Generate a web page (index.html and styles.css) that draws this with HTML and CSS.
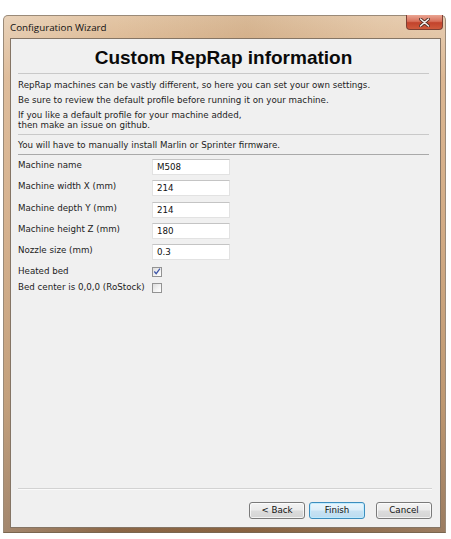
FILE: index.html
```html
<!DOCTYPE html>
<html>
<head>
<meta charset="utf-8">
<link rel="stylesheet" href="styles.css">
</head>
<body>
<div class="window">
  <div class="titlebar">
    <span class="title">Configuration Wizard</span>
    <div class="close">
      <svg width="11" height="9" viewBox="0 0 11 9"><path d="M1.5 1 L9.5 8 M9.5 1 L1.5 8" stroke="#4a2a20" stroke-width="3.2" stroke-linecap="round"/><path d="M1.5 1 L9.5 8 M9.5 1 L1.5 8" stroke="#f4f0ee" stroke-width="1.6" stroke-linecap="round"/></svg>
    </div>
  </div>
  <div class="client">
    <h1 class="heading">Custom RepRap information</h1>
    <div class="sep sep-light"></div>
    <p class="line first">RepRap machines can be vastly different, so here you can set your own settings.</p>
    <p class="line">Be sure to review the default profile before running it on your machine.</p>
    <p class="multi">If you like a default profile for your machine added,<br>then make an issue on github.</p>
    <div class="sep sep-light"></div>
    <p class="line fw">You will have to manually install Marlin or Sprinter firmware.</p>
    <div class="sep sep-dark"></div>
    <div class="form">
      <div class="row"><span class="label">Machine name</span><div class="input">M508</div></div>
      <div class="row"><span class="label">Machine width X (mm)</span><div class="input">214</div></div>
      <div class="row"><span class="label">Machine depth Y (mm)</span><div class="input">214</div></div>
      <div class="row"><span class="label">Machine height Z (mm)</span><div class="input">180</div></div>
      <div class="row"><span class="label">Nozzle size (mm)</span><div class="input">0.3</div></div>
      <div class="row check-row first-check"><span class="label">Heated bed</span>
        <div class="check checked"><svg width="9" height="9" viewBox="0 0 9 9"><path d="M1.5 4.5 L3.6 7 L7.8 1.2" fill="none" stroke="#3d55a8" stroke-width="1.4"/></svg></div>
      </div>
      <div class="row check-row"><span class="label">Bed center is 0,0,0 (RoStock)</span><div class="check"></div></div>
    </div>
    <div class="bottom">
      <div class="sep sep-bottom"></div>
      <div class="buttons">
        <div class="btn">&lt; Back</div>
        <div class="btn default">Finish</div>
        <div class="btn cancel">Cancel</div>
      </div>
    </div>
  </div>
</div>
</body>
</html>
```
FILE: styles.css
```css
html, body {
  margin: 0;
  padding: 0;
  background: #ffffff;
}
.window {
  margin: 15px 0 0 3px;
  width: 443px;
  height: 518px;
  box-sizing: border-box;
  padding: 0 4px 4px 6px;
  border-radius: 5px 5px 0 0;
  border: 1px solid #9a8a78;
  border-bottom-color: #7a6650;
  background:
    linear-gradient(90deg, rgba(255,255,255,0.22) 0%, rgba(255,255,255,0) 25%, rgba(120,70,20,0.10) 55%, rgba(255,255,255,0.08) 85%, rgba(255,255,255,0.15) 100%),
    linear-gradient(180deg, #e3c6a6 0%, #d6ab80 12%, #cb9d70 40%, #b38658 75%, #8a6646 100%);
  display: flex;
  flex-direction: column;
}
.titlebar {
  height: 22px;
  display: flex;
  align-items: center;
  position: relative;
  flex: none;
}
.title {
  font-family: "Open Sans", "Noto Sans", sans-serif;
  font-size: 9.8px;
  color: #111111;
  margin-left: 0px;
  margin-top: 1px;
}
.close {
  position: absolute;
  right: -2px;
  top: -1px;
  width: 37px;
  height: 15px;
  box-sizing: border-box;
  border: 1px solid #7d3f33;
  border-top: none;
  border-radius: 0 0 4px 4px;
  background: linear-gradient(180deg, #e9a593 0%, #d8705a 45%, #c2432c 55%, #cf5a3c 100%);
  display: flex;
  align-items: center;
  justify-content: center;
}
.close svg { display: block; }
.client {
  flex: 1;
  background: #f0f0f0;
  border: 1px solid #857565;
  box-sizing: border-box;
  padding: 0 8px 8px 7px;
  display: flex;
  flex-direction: column;
  font-family: "DejaVu Sans", sans-serif;
  font-size: 8.7px;
  color: #1c1c1c;
}
.heading {
  margin: 8px 0 0 0;
  font-family: "Liberation Sans", Arial, sans-serif;
  font-weight: bold;
  font-size: 19px;
  line-height: 22px;
  text-align: center;
  color: #0a0a0a;
  padding-right: 3px;
}
.sep {
  height: 1px;
  flex: none;
}
.sep-light {
  background: #c9c9c9;
  margin-right: 3px;
}
.sep-dark {
  background: #a9a9a9;
  margin-right: 3px;
}
.heading + .sep { margin-top: 4px; }
.line {
  margin: 0;
  line-height: 15px;
  white-space: nowrap;
}
.line.first { margin-top: 4px; }
.multi {
  margin: 2px 0 0 0;
  line-height: 10px;
  white-space: nowrap;
}
.multi + .sep { margin-top: 4px; }
.fw { margin-top: 3px; }
.fw + .sep { margin-top: 1px; }
.form {
  margin-top: 4px;
  display: flex;
  flex-direction: column;
  gap: 5.25px;
}
.row {
  display: grid;
  grid-template-columns: 134px 78px;
  align-items: start;
  height: 16px;
}
.label {
  line-height: 13px;
  white-space: nowrap;
}
.input {
  height: 16px;
  box-sizing: border-box;
  background: #ffffff;
  border: 1px solid #e2e2e2;
  border-top-color: #c4c4c4;
  padding-left: 4px;
  line-height: 15px;
  color: #111111;
}
.check-row {
  height: 11px;
  align-items: center;
}
.first-check { margin-top: 0.75px; }
.check-row .label { line-height: 11px; }
.check {
  width: 10px;
  height: 10px;
  box-sizing: border-box;
  border: 1px solid #939393;
  background: linear-gradient(135deg, #dcdcdc 0%, #f4f4f4 60%, #ffffff 100%);
  display: flex;
  align-items: center;
  justify-content: center;
}
.check svg { display: block; }
.bottom {
  margin-top: auto;
}
.sep-bottom {
  background: #d2d2d2;
  border-bottom: 1px solid #fafafa;
}
.buttons {
  margin-top: 12px;
  display: flex;
  justify-content: flex-end;
}
.btn {
  width: 56px;
  height: 17px;
  box-sizing: border-box;
  border: 1px solid #7a7a7a;
  border-radius: 3px;
  background: linear-gradient(180deg, #f3f3f3 0%, #ebebeb 48%, #dcdcdc 52%, #d4d4d4 100%);
  box-shadow: inset 0 0 0 1px rgba(255,255,255,0.7);
  text-align: center;
  line-height: 15px;
  color: #111111;
}
.btn.default {
  margin-left: 4px;
  border-color: #3c8dbd;
  background: linear-gradient(180deg, #eaf6fc 0%, #ddeef9 48%, #c7e2f3 52%, #bcdcf0 100%);
  box-shadow: inset 0 0 0 1px rgba(190,235,255,0.9);
}
.btn.cancel {
  margin-left: 11px;
}
```
